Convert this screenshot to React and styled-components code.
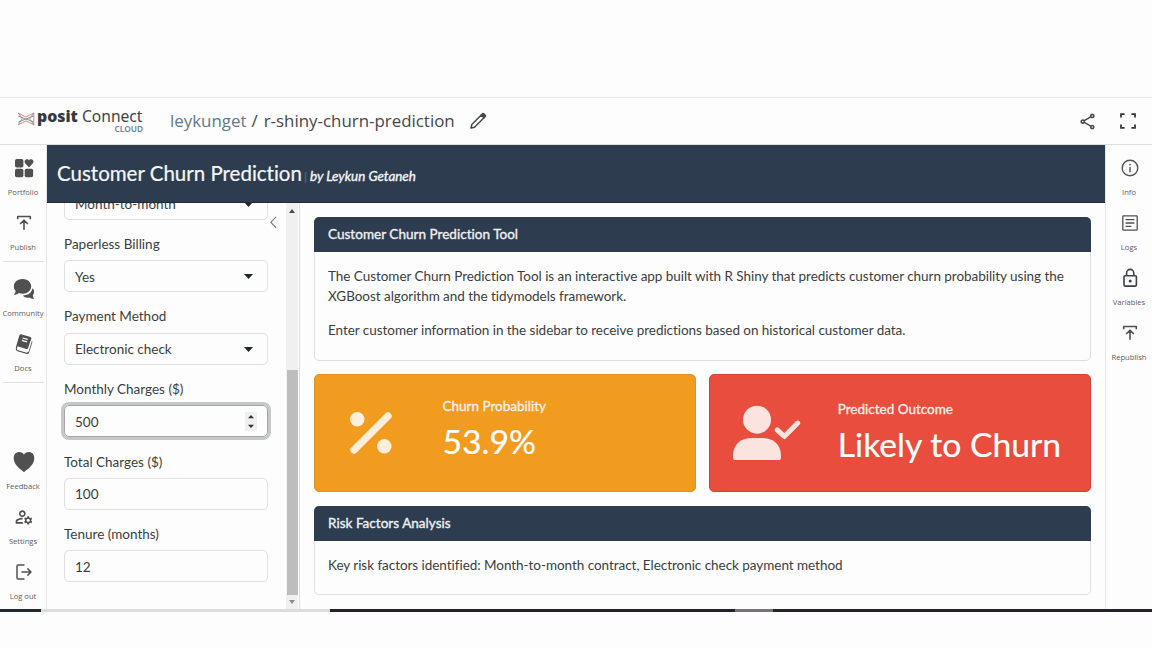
import React from 'react';
import styled, { createGlobalStyle } from 'styled-components';
import { MdOutlineManageAccounts, MdOutlineShare } from 'react-icons/md';

const Global = createGlobalStyle`
  * { box-sizing: border-box; }
  body { margin: 0; background: #fdfdfd; }
`;

const Page = styled.div`
  width: 1152px;
  height: 648px;
  padding-top: 97px;
  overflow: hidden;
  background: #fdfdfd;
  color: #3a3d41;
  font-family: Lato, 'Liberation Sans', sans-serif;
  font-variant-ligatures: none;
`;

const TopBar = styled.header`
  height: 48px;
  display: flex;
  align-items: center;
  border-top: 1px solid #e9e9e9;
  border-bottom: 1px solid #dedede;
  padding: 0 14px 0 17px;
  font-family: 'Open Sans', sans-serif;
`;

const Brand = styled.div`
  width: 153px;
  height: 46px;
  display: flex;
  padding-top: 11px;
`;
const BrandWords = styled.div`
  width: 107px;
  margin-left: 2px;
  display: flex;
  flex-direction: column;
`;
const BrandLine = styled.div`
  display: flex;
  align-items: baseline;
  white-space: nowrap;
  line-height: 14px;
  height: 15px;
`;
const Posit = styled.span`
  font: 800 15.8px/14px 'Open Sans', sans-serif;
  color: #363a40;
  width: 45px;
`;
const Connect = styled.span`
  font: 400 15.6px/14px 'Noto Sans', sans-serif;
  color: #404449;
`;
const Cloud = styled.span`
  align-self: flex-end;
  font: 600 8.3px/10px 'Noto Sans', sans-serif;
  color: #6583a0;
  margin: 0 1px 0 0;
`;

const Crumbs = styled.div`
  display: flex;
  align-items: center;
  font-size: 16.9px;
  line-height: 24px;
  color: #45484c;
  flex: 1;
  & > svg { margin-left: 14px; }
`;
const Owner = styled.span`
  color: #62798b;
`;
const Slash = styled.span`
  margin: 0 6px 0 5px;
`;
const Actions = styled.div`
  display: flex;
  align-items: center;
  gap: 21px;
  color: #45484c;
`;

const Workspace = styled.div`
  display: flex;
  height: 464px;
`;

const Rail = styled.nav`
  width: ${(p) => p.$width}px;
  flex: none;
  display: flex;
  flex-direction: column;
  padding: 1px 0 4px;
  border-${(p) => p.$edge}: 1px solid #e4e4e4;
`;
const RailEntry = styled.div`
  height: 55px;
  flex: none;
  display: flex;
  flex-direction: column;
  align-items: center;
  color: #505050;
  font-family: 'Open Sans', sans-serif;
`;
const RailIcon = styled.div`
  height: 44px;
  display: flex;
  align-items: center;
  justify-content: center;
  padding-left: 1px;
  margin-bottom: -4px;
`;
const RailLabel = styled.span`
  font-size: 7.6px;
  line-height: 12px;
  white-space: nowrap;
  color: #606060;
`;
const RailDivider = styled.hr`
  width: 41px;
  margin: 5px 0 4.5px 3px;
  border: 0;
  border-top: 1px solid #dfdfdf;
  flex: none;
`;
const Spacer = styled.div`
  flex: 1;
`;

const AppFrame = styled.main`
  flex: 1;
  display: flex;
  flex-direction: column;
`;
const Navbar = styled.div`
  height: 58px;
  flex: none;
  background: #2d3d4f;
  border-bottom: 1px solid #1f2c39;
  padding: 0 10px;
  display: flex;
  align-items: baseline;
  line-height: 57px;
  color: #f4f6f8;
  white-space: nowrap;
`;
const NavTitle = styled.span`
  font-size: 20.5px;
  -webkit-text-stroke: 0.2px currentColor;
  width: 247px;
`;
const NavDivider = styled.span`
  font-size: 12px;
  color: #66717d;
  width: 6px;
`;
const NavAuthor = styled.span`
  font-size: 13.4px;
  font-style: italic;
  -webkit-text-stroke: 0.35px currentColor;
`;

const Body = styled.div`
  flex: 1;
  min-height: 0;
  display: flex;
`;
const Sidebar = styled.aside`
  width: 253px;
  flex: none;
  display: flex;
  overflow: hidden;
  border-right: 1px solid #dcdcdc;
`;
const Form = styled.form`
  width: 204px;
  margin: -15.5px 0 0 17px;
  flex: none;
`;
const Field = styled.div`
  display: flex;
  flex-direction: column;
  margin-bottom: 14.4px;
`;
const FieldLabel = styled.label`
  font-size: 13.5px;
  line-height: 20.2px;
  margin-bottom: 6px;
  white-space: nowrap;
`;
const Control = styled.div`
  height: 32px;
  display: flex;
  align-items: center;
  justify-content: space-between;
  padding: 1px 14px 0 10px;
  font-size: 13.5px;
  border-radius: 5px;
  border: 1px solid ${(p) => (p.$focus ? '#a5a5a5' : '#e0e0e0')};
  box-shadow: ${(p) => (p.$focus ? '0 0 0 3px #c6c8c8' : 'none')};
`;
const Spinner = styled.div`
  width: 12px;
  height: 19px;
  margin-right: -3.5px;
  display: flex;
  align-items: center;
  justify-content: center;
  background: #efefef;
`;
const Collapse = styled.div`
  width: 18px;
  padding: 13px 0 0 1px;
  line-height: 0;
`;
const ScrollTrack = styled.div`
  width: 12px;
  display: flex;
  flex-direction: column;
  justify-content: space-between;
  align-items: center;
  padding-top: 6px;
  background: #f0f0f0;
`;
const ScrollThumb = styled.div`
  width: 11px;
  height: 225px;
  background: #bdbdbd;
`;
const ScrollGap = styled.div`
  flex: 1;
`;
const ScrollEnd = styled.div`
  height: 14px;
  display: flex;
  align-items: center;
`;

const Content = styled.section`
  flex: 1;
  min-width: 0;
  padding: 14px 14px 0;
  display: flex;
  flex-direction: column;
  gap: 13.5px;
`;
const Card = styled.article`
  height: ${(p) => p.$height}px;
  flex: none;
  border: 1px solid #dddedf;
  border-radius: 5px;
`;
const CardHeader = styled.h2`
  margin: -1px -1px 0;
  height: 35px;
  padding-left: 14px;
  font-size: 13.5px;
  font-weight: 400;
  -webkit-text-stroke: 0.35px currentColor;
  letter-spacing: 0.03px;
  line-height: 35px;
  border-radius: 5px 5px 0 0;
  background: #2d3d4f;
  color: #eef1f4;
`;
const CardBody = styled.div`
  padding: 14px 13px;
  font-size: 13.5px;
  letter-spacing: -0.042px;
  line-height: 20.3px;
  white-space: nowrap;
`;
const Para = styled.p`
  margin: 0 0 13.4px;
`;
const Boxes = styled.div`
  display: grid;
  grid-template-columns: 1fr 1fr;
  gap: 13.5px;
`;
const ValueBox = styled.article`
  height: 118px;
  display: flex;
  align-items: center;
  border-radius: 5px;
  background: ${(p) => p.$fill};
  border: 1px solid ${(p) => p.$edge};
  color: #fff;
`;
const BoxIcon = styled.div`
  width: 127.5px;
  display: flex;
  padding-left: ${(p) => p.$inset}px;
`;
const BoxText = styled.div`
  display: flex;
  flex-direction: column;
  white-space: nowrap;
  padding-bottom: ${(p) => p.$lift}px;
`;
const BoxLabel = styled.span`
  font-size: 13.5px;
  line-height: 16px;
  color: #fff3e6;
  -webkit-text-stroke: 0.3px currentColor;
`;
const BoxValue = styled.span`
  font-size: 33.7px;
  line-height: 42px;
  margin-top: 6px;
  -webkit-text-stroke: 0.2px currentColor;
`;

const Taskbar = styled.footer`
  height: 3px;
  display: flex;
`;
const TaskPart = styled.div`
  width: ${(p) => p.$width}px;
  background: ${(p) => p.$tone};
`;

const stroke = { fill: 'none', stroke: 'currentColor', strokeLinecap: 'round', strokeLinejoin: 'round' };

const PositMark = () => (
  <svg width="18" height="20" viewBox="0 0 18 20" fill="none" strokeWidth="1">
    <path d="M1.2 4 L9 8 L16.8 4 V15.8 L9 12 L1.2 15.8" stroke="#e58a72" />
    <path d="M1.2 4 L5.4 9.8 L1.2 15.8 M16.8 4 L12.6 9.8 L16.8 15.8" stroke="#8297a8" />
    <path d="M1.2 7 L9 10 L16.8 13 M1.2 13 L9 10 L16.8 7" stroke="#8297a8" />
  </svg>
);
const Pencil = () => (
  <svg width="18" height="18" viewBox="0 0 18 18" {...stroke} strokeWidth="1.5">
    <path d="M2 16 L2.8 12.5 L12.3 3 L15 5.7 L5.5 15.2 Z" />
    <path d="M12.4 2.9 L13.6 1.7 Q14.2 1.3 14.8 1.8 L16.2 3.2 Q16.7 3.8 16.2 4.4 L15 5.6 Z" fill="currentColor" />
  </svg>
);
const Fullscreen = () => (
  <svg width="20" height="20" viewBox="0 0 20 20" fill="none" stroke="#34373b" strokeWidth="1.8">
    <path d="M3 6.6 V3.2 H6.6 M13.4 3.2 H17 V6.6 M17 13.4 V16.8 H13.4 M6.6 16.8 H3 V13.4" />
  </svg>
);
const Portfolio = () => (
  <svg width="20" height="20" viewBox="0 0 20 20" fill="currentColor">
    <rect x="1" y="1" width="8.4" height="8.4" rx="1.7" />
    <rect x="1" y="10.8" width="8.4" height="8.4" rx="1.7" />
    <rect x="10.7" y="10.8" width="8.4" height="8.4" rx="1.7" />
    <path d="M15 9.4 L11.3 5.5 C9.5 3.3 11.2 1.1 13 1.2 C14.1 1.2 14.7 1.8 15 2.4 C15.3 1.8 15.9 1.2 17 1.2 C18.8 1.1 20.5 3.3 18.7 5.5 Z" />
  </svg>
);
const Publish = () => (
  <svg width="18" height="18" viewBox="0 0 18 18" {...stroke} strokeWidth="1.6" strokeLinecap="butt">
    <path d="M2.7 5.3 V2.5 H15.3 V5.3 M9 15.7 V6.5 M5.1 10 L9 6.2 L12.9 10" />
  </svg>
);
const Bubbles = () => (
  <svg width="22" height="22" viewBox="0 0 22 22" fill="currentColor">
    <path d="M21 12.6 C21.4 15.2 20.6 16.5 19.8 17.4 C20.2 18.9 20.8 19.8 21.2 20.8 C18.8 20.8 17.6 20.2 16.4 19.4 C13.8 20.1 11.2 19.3 10 17.4 C15.6 17.3 18.9 14.4 19.4 10.3 C20.2 10.8 20.7 11.6 21 12.6 Z" />
    <path d="M9.6 .9 C14.5 .9 18.2 4 18.2 8.2 C18.2 12.5 14.5 15.7 9.6 15.7 C8.3 15.7 7.1 15.5 6 15 C4.6 16.2 3 16.8 1 16.9 C1.9 15.7 2.5 14.5 2.7 13 C1.5 11.8 .8 10.1 .8 8.2 C.8 4 4.6 .9 9.6 .9 Z" />
  </svg>
);
const Book = () => (
  <svg width="20" height="22" viewBox="0 0 20 22">
    <path d="M7 1.2 L16.5 4 Q17.6 4.5 17.3 5.5 L14 15.2 Q13.5 16.4 12.3 16 L3.6 13.3 L2.8 15.2 L3.2 17 L12.8 19.8 L14.5 18.8 L18.1 7.6 L18.3 9.5 L15 19.8 Q14.3 21.3 12.8 21 L3.4 18.2 Q1.2 17 1.9 14.3 L5.2 2.8 Q5.7 1 7 1.2 Z" fill="#505050" />
    <path d="M8.6 5 L13.7 6.4 M7.9 7.4 L13 8.8" stroke="#fff" strokeWidth="1.2" />
  </svg>
);
const Heart = () => (
  <svg width="22" height="22" viewBox="0 0 22 22" fill="currentColor">
    <path d="M11 21.2 C8 18.2 .7 14.4 .7 7.2 C.7 3.2 3.2 1 6.3 1 C8.5 1 10.2 2.1 11 3.7 C11.8 2.1 13.5 1 15.7 1 C18.8 1 21.3 3.2 21.3 7.2 C21.3 14.4 14 18.2 11 21.2 Z" />
  </svg>
);
const LogOut = () => (
  <svg width="18" height="18" viewBox="0 0 18 18" {...stroke} strokeWidth="1.5">
    <path d="M9 2 H3.3 Q2 2 2 3.3 V14.7 Q2 16 3.3 16 H9 M7 9 H16 M12.8 5.9 L16 9 L12.8 12.1" />
  </svg>
);
const Info = () => (
  <svg width="18" height="18" viewBox="0 0 18 18" fill="none" stroke="currentColor" strokeWidth="1.4">
    <circle cx="9" cy="9" r="7.8" />
    <path d="M9 8 V13.2 M9 5 V6.6" />
  </svg>
);
const Logs = () => (
  <svg width="18" height="18" viewBox="0 0 18 18" fill="none" stroke="currentColor" strokeWidth="1.3">
    <rect x="1.8" y="1.8" width="14.4" height="14.4" rx="0.6" />
    <path d="M4.6 5.6 H13.4 M4.6 9 H13.4 M4.6 12.4 H10.4" />
  </svg>
);
const Lock = () => (
  <svg width="18" height="20" viewBox="0 0 18 20" fill="none" stroke="#3f4246" strokeWidth="1.6">
    <rect x="3" y="7.7" width="12.4" height="10.4" rx="1" />
    <path d="M5.6 7.7 V5 A3.6 3.6 0 0 1 12.8 5 V7.7" />
    <circle cx="9.2" cy="12.9" r="1.5" fill="#3f4246" stroke="none" />
  </svg>
);
const Triangle = ({ up, w = 9, h = 5, fill = '#222629' }) => (
  <svg width={w} height={h} viewBox="0 0 8 5" preserveAspectRatio="none">
    <path d={up ? 'M0 5 L4 0 L8 5 Z' : 'M0 0 L4 5 L8 0 Z'} fill={fill} />
  </svg>
);
const Steppers = () => (
  <svg width="8" height="15" viewBox="0 0 8 15" fill="#303030">
    <path d="M1 4.2 L4 1 L7 4.2 Z M1 10.8 L4 14 L7 10.8 Z" />
  </svg>
);
const Chevron = () => (
  <svg width="9" height="13" viewBox="0 0 9 13" {...stroke} stroke="#777" strokeWidth="1.1">
    <path d="M6.8 1.2 L1.8 6.3 L6.8 11.5" />
  </svg>
);
const Percent = () => (
  <svg width="42" height="42" viewBox="0 0 42 42" fill="#feefdc">
    <circle cx="7.3" cy="7.3" r="7.2" />
    <circle cx="34.3" cy="34.3" r="7.2" />
    <path d="M4 38 L38 4" stroke="#feefdc" strokeWidth="7.4" strokeLinecap="round" />
  </svg>
);
const PersonCheck = () => (
  <svg width="68" height="56" viewBox="0 0 68 56" fill="#fbe3e0">
    <circle cx="24" cy="14.7" r="14" />
    <path d="M0 51 C0 38.4 9 33 19 33 H29 C39 33 48 38.4 48 51 V52.4 Q48 55 45.4 55 H2.6 Q0 55 0 52.4 Z" />
    <path d="M44.2 24.9 L51.3 31.5 L64.7 18.1" fill="none" stroke="#fbe3e0" strokeWidth="5" strokeLinecap="round" strokeLinejoin="round" />
  </svg>
);

const RailItem = ({ icon, label }) => (
  <RailEntry>
    <RailIcon>{icon}</RailIcon>
    <RailLabel>{label}</RailLabel>
  </RailEntry>
);

const FormField = ({ label, value, kind, focus }) => (
  <Field>
    {label && <FieldLabel>{label}</FieldLabel>}
    <Control $focus={focus}>
      {value}
      {kind === 'select' && <Triangle />}
      {kind === 'number' && <Spinner><Steppers /></Spinner>}
    </Control>
  </Field>
);

export default function App() {
  return (
    <Page>
      <Global />
      <TopBar>
        <Brand>
          <PositMark />
          <BrandWords>
            <BrandLine>
              <Posit>posit</Posit>
              <Connect>Connect</Connect>
            </BrandLine>
            <Cloud>CLOUD</Cloud>
          </BrandWords>
        </Brand>
        <Crumbs>
          <Owner>leykunget</Owner>
          <Slash>/</Slash>
          <span>r-shiny-churn-prediction</span>
          <Pencil />
        </Crumbs>
        <Actions>
          <MdOutlineShare size={19} />
          <Fullscreen />
        </Actions>
      </TopBar>

      <Workspace>
        <Rail $width={47} $edge="right">
          <RailItem icon={<Portfolio />} label="Portfolio" />
          <RailItem icon={<Publish />} label="Publish" />
          <RailDivider />
          <RailItem icon={<Bubbles />} label="Community" />
          <RailItem icon={<Book />} label="Docs" />
          <RailDivider />
          <Spacer />
          <RailItem icon={<Heart />} label="Feedback" />
          <RailItem icon={<MdOutlineManageAccounts size={20} />} label="Settings" />
          <RailItem icon={<LogOut />} label="Log out" />
        </Rail>

        <AppFrame>
          <Navbar>
            <NavTitle>Customer Churn Prediction</NavTitle>
            <NavDivider>|</NavDivider>
            <NavAuthor>by Leykun Getaneh</NavAuthor>
          </Navbar>
          <Body>
            <Sidebar>
              <Form>
                <FormField value="Month-to-month" kind="select" />
                <FormField label="Paperless Billing" value="Yes" kind="select" />
                <FormField label="Payment Method" value="Electronic check" kind="select" />
                <FormField label="Monthly Charges ($)" value="500" kind="number" focus />
                <FormField label="Total Charges ($)" value="100" />
                <FormField label="Tenure (months)" value="12" />
              </Form>
              <Collapse><Chevron /></Collapse>
              <ScrollTrack>
                <Triangle up w={6} h={4} fill="#4a4a4a" />
                <ScrollGap />
                <ScrollThumb />
                <ScrollEnd><Triangle w={6} h={4} fill="#8a8a8a" /></ScrollEnd>
              </ScrollTrack>
            </Sidebar>
            <Content>
              <Card $height={143.5}>
                <CardHeader>Customer Churn Prediction Tool</CardHeader>
                <CardBody>
                  <Para>
                    The Customer Churn Prediction Tool is an interactive app built with R Shiny that predicts customer churn probability using the
                    <br />
                    XGBoost algorithm and the tidymodels framework.
                  </Para>
                  <Para>Enter customer information in the sidebar to receive predictions based on historical customer data.</Para>
                </CardBody>
              </Card>
              <Boxes>
                <ValueBox $fill="#f29c1f" $edge="#dc9226">
                  <BoxIcon $inset={35}><Percent /></BoxIcon>
                  <BoxText $lift={6}>
                    <BoxLabel>Churn Probability</BoxLabel>
                    <BoxValue>53.9%</BoxValue>
                  </BoxText>
                </ValueBox>
                <ValueBox $fill="#e84d3e" $edge="#cf4338">
                  <BoxIcon $inset={23}><PersonCheck /></BoxIcon>
                  <BoxText $lift={0}>
                    <BoxLabel>Predicted Outcome</BoxLabel>
                    <BoxValue>Likely to Churn</BoxValue>
                  </BoxText>
                </ValueBox>
              </Boxes>
              <Card $height={89.5}>
                <CardHeader>Risk Factors Analysis</CardHeader>
                <CardBody>
                  <Para>Key risk factors identified: Month-to-month contract, Electronic check payment method</Para>
                </CardBody>
              </Card>
            </Content>
          </Body>
        </AppFrame>

        <Rail $width={47} $edge="left">
          <RailItem icon={<Info />} label="Info" />
          <RailItem icon={<Logs />} label="Logs" />
          <RailItem icon={<Lock />} label="Variables" />
          <RailItem icon={<Publish />} label="Republish" />
        </Rail>
      </Workspace>
      <Taskbar>
        <TaskPart $width={41} $tone="#25292b" />
        <TaskPart $width={289} $tone="#dcdcdc" />
        <TaskPart $width={405} $tone="#252229" />
        <TaskPart $width={38} $tone="#777477" />
        <TaskPart $width={379} $tone="#252229" />
      </Taskbar>
    </Page>
  );
}
